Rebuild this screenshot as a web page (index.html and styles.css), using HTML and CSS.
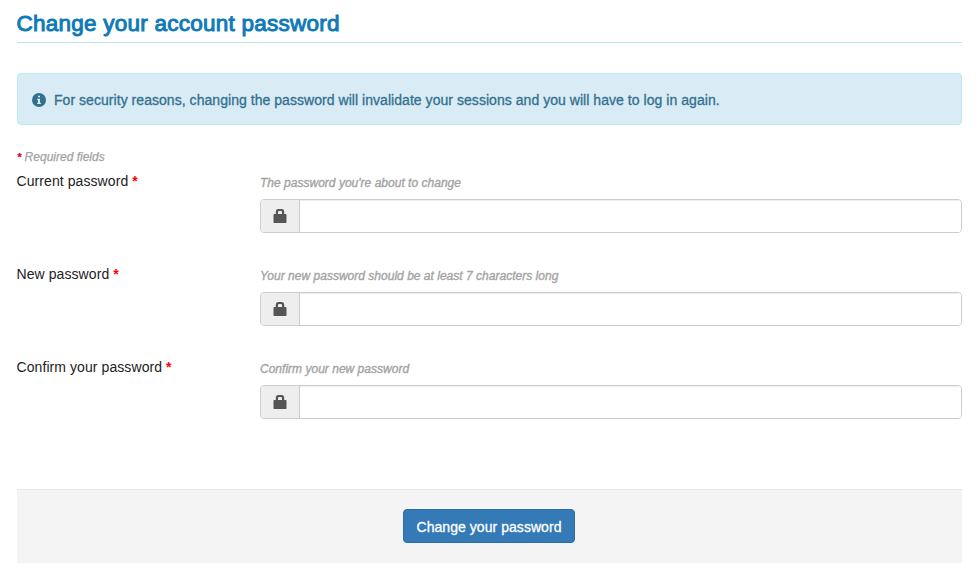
FILE: index.html
```html
<!DOCTYPE html>
<html lang="en">
<head>
<meta charset="utf-8">
<title>Change your account password</title>
<link rel="stylesheet" href="styles.css">
</head>
<body>
<svg class="defs" aria-hidden="true"><symbol id="lock" viewBox="0 0 14 14"><path fill-rule="evenodd" d="M.5 5.800Q.5 5 1.300 5H2.800V3Q2.800 0 5.500 0h3Q11.200 0 11.200 3v2h1.500q.8 0 .8.800v7.400q0 .8-.8.800H1.300q-.8 0-.8-.8zM5 5h4V3.200Q9 2 8 2H6Q5 2 5 3.200z"/></symbol></svg>
<main>
<h1>Change your account password</h1>
<div class="alert">
<svg class="info" viewBox="0 0 14 14"><circle cx="7" cy="7" r="7"/><path fill="#d9edf7" d="M6 2.700h2v1.500H6zM5.200 5.700H8v4.100h.9V11H5.200V9.800H6V7h-.8z"/></svg>
<span>For security reasons, changing the password will invalidate your sessions and you will have to log in again.</span>
</div>
<form>
<p class="required"><b class="star">*</b> Required fields</p>
<div class="row"><label for="current">Current password <b class="star">*</b></label>
<div class="field"><p class="hint">The password you're about to change</p><div class="group"><span class="addon"><svg class="lock"><use href="#lock"/></svg></span><input id="current" type="password"></div></div></div>
<div class="row"><label for="new">New password <b class="star">*</b></label>
<div class="field"><p class="hint">Your new password should be at least 7 characters long</p><div class="group"><span class="addon"><svg class="lock"><use href="#lock"/></svg></span><input id="new" type="password"></div></div></div>
<div class="row"><label for="confirm">Confirm your password <b class="star">*</b></label>
<div class="field"><p class="hint">Confirm your new password</p><div class="group"><span class="addon"><svg class="lock"><use href="#lock"/></svg></span><input id="confirm" type="password"></div></div></div>
<div class="actions"><button type="button">Change your password</button></div>
</form>
</main>
</body>
</html>
```
FILE: styles.css
```css
* { box-sizing: border-box; }
body { margin: 0; background: #fff; color: #333; font: 14px/20px "Liberation Sans", Arial, sans-serif; }
.defs { display: block; width: 0; height: 0; }
main { padding: 0 17px; }
h1 { margin: 0 0 30px; height: 43px; padding-top: 11px; border-bottom: 1px solid #bcdfed; color: #0f7ab8; font-size: 22.5px; line-height: 25px; font-weight: 400; text-indent: -.5px; -webkit-text-stroke: 1px; letter-spacing: .24px; }
.alert { display: flex; align-items: center; height: 52px; margin-bottom: 22px; padding: 2px 14px 0; border: 1px solid #bce8f1; border-radius: 4px; background: #d9ebf5; color: #31708f; letter-spacing: .046px; -webkit-text-stroke: .3px; }
.info { width: 14px; height: 14px; margin-right: 8px; fill: currentColor; -webkit-text-stroke: 0; }
.required { margin: 0; height: 24px; font-size: 12px; font-style: italic; color: #a3a3a3; -webkit-text-stroke: .25px; }
.star { color: #f00; font-size: 14px; line-height: 1; }
.required .star { color: #d9003c; font-size: 11px; }
.row { display: flex; height: 93px; }
label { width: 243px; color: #222; text-indent: -.5px; letter-spacing: .08px; }
.field { flex: 1; }
.hint { margin: 0; height: 28px; padding-top: 2px; font-size: 12px; font-style: italic; color: #a3a3a3; letter-spacing: .015px; -webkit-text-stroke: .35px; }
.group { display: flex; height: 34px; border: 1px solid #ccc; border-radius: 4px; overflow: hidden; }
.addon { width: 39px; display: flex; align-items: center; justify-content: center; border-right: 1px solid #ccc; background: #eee; }
.lock { width: 14px; height: 14px; fill: #555; }
input { flex: 1; min-width: 0; border: 0; box-shadow: inset 0 1px 1px rgba(0,0,0,.075); }
.actions { height: 74px; margin-top: 39px; padding: 19px 1px 0 0; display: flex; justify-content: center; border-top: 1px solid #e5e5e5; background: #f4f4f4; }
button { width: 172px; height: 34px; padding: 2px 0 0; border: 1px solid #2e6da4; border-radius: 4px; background: #337ab7; color: #fff; font: 14px "Liberation Sans", Arial, sans-serif; letter-spacing: .05px; -webkit-text-stroke: .3px; }
```
